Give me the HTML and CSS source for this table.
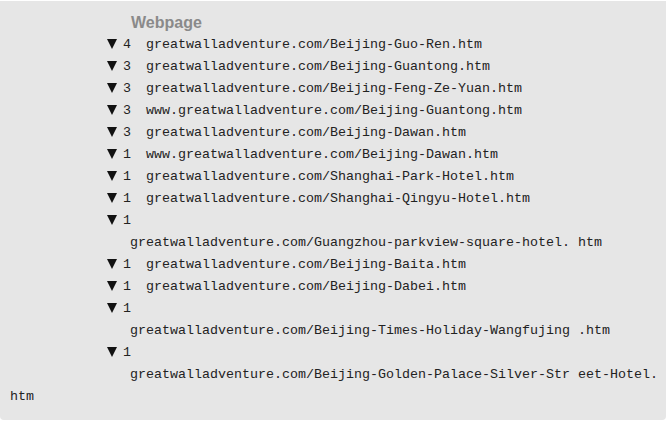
FILE: index.html
```html
<!DOCTYPE html>
<html lang="en">
<head>
  <meta charset="UTF-8">
  <title>Webpage list</title>
  <link rel="stylesheet" href="styles.css">
</head>
<body>
  <div class="panel">
    <div class="head">Webpage</div>

    <div class="row"><span class="tri"></span><span class="num">4</span><span class="url">greatwalladventure.com/Beijing-Guo-Ren.htm</span></div>
    <div class="row"><span class="tri"></span><span class="num">3</span><span class="url">greatwalladventure.com/Beijing-Guantong.htm</span></div>
    <div class="row"><span class="tri"></span><span class="num">3</span><span class="url">greatwalladventure.com/Beijing-Feng-Ze-Yuan.htm</span></div>
    <div class="row"><span class="tri"></span><span class="num">3</span><span class="url">www.greatwalladventure.com/Beijing-Guantong.htm</span></div>
    <div class="row"><span class="tri"></span><span class="num">3</span><span class="url">greatwalladventure.com/Beijing-Dawan.htm</span></div>
    <div class="row"><span class="tri"></span><span class="num">1</span><span class="url">www.greatwalladventure.com/Beijing-Dawan.htm</span></div>
    <div class="row"><span class="tri"></span><span class="num">1</span><span class="url">greatwalladventure.com/Shanghai-Park-Hotel.htm</span></div>
    <div class="row"><span class="tri"></span><span class="num">1</span><span class="url">greatwalladventure.com/Shanghai-Qingyu-Hotel.htm</span></div>
    <div class="row"><span class="tri"></span><span class="num">1</span></div>
    <div class="wrap">greatwalladventure.com/Guangzhou-parkview-square-hotel. htm</div>
    <div class="row"><span class="tri"></span><span class="num">1</span><span class="url">greatwalladventure.com/Beijing-Baita.htm</span></div>
    <div class="row"><span class="tri"></span><span class="num">1</span><span class="url">greatwalladventure.com/Beijing-Dabei.htm</span></div>
    <div class="row"><span class="tri"></span><span class="num">1</span></div>
    <div class="wrap">greatwalladventure.com/Beijing-Times-Holiday-Wangfujing .htm</div>
    <div class="row"><span class="tri"></span><span class="num">1</span></div>
    <div class="wrap">greatwalladventure.com/Beijing-Golden-Palace-Silver-Str eet-Hotel.</div>
    <div class="tail">htm</div>
  </div>
</body>
</html>
```

FILE: styles.css
```css
body {
  margin: 0;
  background-color: #ffffff;
}

.panel {
  margin-top: 1px;
  width: 666px;
  height: 419px;
  box-sizing: border-box;
  padding-top: 11px;
  background-color: #e6e6e6;
  border-radius: 0 0 4px 4px;
  font-family: "Liberation Mono", monospace;
  font-size: 13.33px;
  line-height: 22px;
  color: #222;
}

.head {
  padding-left: 131px;
  font-family: "Liberation Sans", Arial, sans-serif;
  font-size: 16px;
  font-weight: bold;
  color: #8a8a8a;
}

.row {
  display: flex;
  align-items: center;
  height: 22px;
  padding-left: 107px;
}

.tri {
  width: 0;
  height: 0;
  border-left: 5px solid transparent;
  border-right: 5px solid transparent;
  border-top: 10px solid #111;
  margin-top: -3px;
}

.num {
  width: 8px;
  margin-left: 6px;
  margin-right: 15px;
}

.url,
.wrap {
  white-space: pre;
}

.wrap {
  padding-left: 130px;
}

.tail {
  padding-left: 10px;
}
```
